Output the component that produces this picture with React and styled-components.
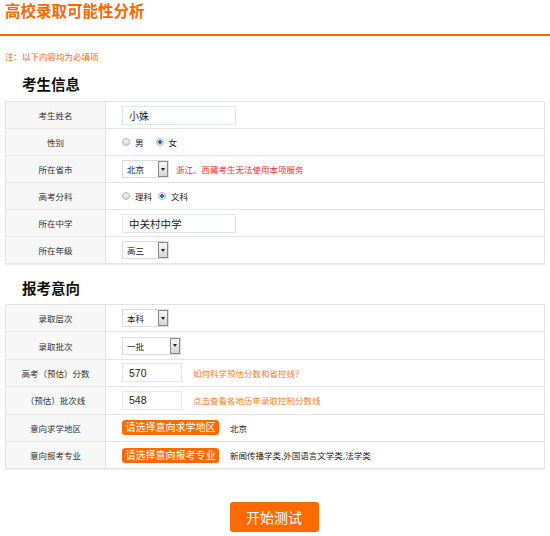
import React from 'react';
import styled, { createGlobalStyle } from 'styled-components';

const GlobalStyle = createGlobalStyle`
  body {
    margin: 0;
    background: #fff;
    font-family: "Liberation Sans", "Noto Sans CJK SC", sans-serif;
    color: #333;
  }
`

const Page = styled.div`
  width: 550px;
  height: 536px;
  overflow: hidden;
`

const Header = styled.div`
  box-sizing: border-box;
  height: 36px;
  border-bottom: 2px solid #ff6600;
  padding: 1px 5px 0;
  h1 {
    margin: 0;
    font-size: 15.5px;
    line-height: 22px;
    font-weight: bold;
    color: #ff6600;
  }
`

const Note = styled.div`
  margin: 14px 5px 0;
  font-size: 8.5px;
  line-height: 14px;
  color: #ff6600;
`

const SectionTitle = styled.h2`
  margin: ${p => p.$top}px 0 0 22px;
  font-size: 14.5px;
  line-height: 20px;
  font-weight: bold;
  color: #111;
`

const Table = styled.table`
  margin: ${p => p.$top}px 5px 0;
  width: 540px;
  border-collapse: collapse;
  border: 1px solid #e3e3e3;
  box-shadow: 0 1px 1px #eee;
  td {
    height: ${p => p.$row}px;
    border-bottom: 1px solid #e6e6e6;
    padding: 0;
    font-size: 8.5px;
  }
`

const Label = styled.td`
  width: 99px;
  background: #f7f7f7;
  border-right: 1px solid #e3e3e3;
  text-align: center;
  color: #333;
`

const Value = styled.td`
  padding-left: 16px !important;
`

const Cell = styled.div`
  display: flex;
  align-items: center;
  gap: ${p => p.$gap || 10}px;
`

const TextBox = styled.div`
  width: ${p => p.$w}px;
  height: 19px;
  box-sizing: border-box;
  border: 1px solid #e2e8ea;
  padding-left: 6px;
  display: flex;
  align-items: center;
  font-size: ${p => p.$fs || 10}px;
  color: #222;
`

const Select = styled.div`
  width: ${p => p.$w}px;
  height: 18px;
  box-sizing: border-box;
  border: 1px solid #dcdcdc;
  display: flex;
  align-items: center;
  justify-content: space-between;
  font-size: 8.5px;
  color: #222;
  padding-left: 4px;
`

const SelectBtn = styled.span`
  box-sizing: border-box;
  width: 10px;
  height: 16px;
  border: 1px solid #8a8a8a;
  background: linear-gradient(#f6f6f6, #d6d6d6);
  display: flex;
  align-items: center;
  justify-content: center;
  &::after {
    content: "";
    border-left: 2.5px solid transparent;
    border-right: 2.5px solid transparent;
    border-top: 3px solid #222;
  }
`

const Radio = styled.span`
  display: inline-flex;
  align-items: center;
  gap: 5px;
  font-size: 8.5px;
  color: #222;
  &::before {
    content: "";
    width: 6px;
    height: 6px;
    border-radius: 50%;
    border: 1px solid #b8b8b8;
    background: ${p => p.$on ? 'radial-gradient(circle, #2a6fb0 0 1.6px, #dfe6ee 2px)' : 'linear-gradient(#f2f2f2, #dadada)'};
  }
`

const Hint = styled.span`
  font-size: 8.5px;
  color: ${p => p.$red ? '#ff2a2a' : '#ff7a2e'};
`

const PickBtn = styled.span`
  display: inline-block;
  width: 97px;
  height: 15px;
  line-height: 15px;
  text-align: center;
  background: #ff6a00;
  border-radius: 3px;
  color: #fff;
  font-size: 10px;
`

const Plain = styled.span`
  font-size: 8.5px;
  color: #222;
`

const Footer = styled.div`
  display: flex;
  justify-content: center;
  margin-top: 33px;
  padding-right: 2px;
`

const StartBtn = styled.button`
  width: 89px;
  height: 30px;
  border: none;
  border-radius: 3px;
  background: #ff6a00;
  color: #fff;
  font-family: inherit;
  font-size: 14px;
  padding: 0;
`

const Sel = ({ w, children }) => (
  <Select $w={w}>{children}<SelectBtn /></Select>
)

export default function App() {
  return (
    <Page>
      <GlobalStyle />
      <Header><h1>高校录取可能性分析</h1></Header>
      <Note>注：以下内容均为必填项</Note>

      <SectionTitle $top={11}>考生信息</SectionTitle>
      <Table $top={6} $row={26}>
        <tbody>
          <tr><Label>考生姓名</Label><Value><TextBox $w={114}>小姝</TextBox></Value></tr>
          <tr><Label>性别</Label><Value><Cell $gap={12}><Radio>男</Radio><Radio $on>女</Radio></Cell></Value></tr>
          <tr><Label>所在省市</Label><Value><Cell $gap={7}><Sel w={47}>北京</Sel><Hint $red>浙江、西藏考生无法使用本项服务</Hint></Cell></Value></tr>
          <tr><Label>高考分科</Label><Value><Cell $gap={6}><Radio>理科</Radio><Radio $on>文科</Radio></Cell></Value></tr>
          <tr><Label>所在中学</Label><Value><TextBox $w={114} $fs={10.5}>中关村中学</TextBox></Value></tr>
          <tr><Label>所在年级</Label><Value><Sel w={47}>高三</Sel></Value></tr>
        </tbody>
      </Table>

      <SectionTitle $top={15}>报考意向</SectionTitle>
      <Table $top={5} $row={26.4}>
        <tbody>
          <tr><Label>录取层次</Label><Value><Sel w={47}>本科</Sel></Value></tr>
          <tr><Label>录取批次</Label><Value><Sel w={59}>一批</Sel></Value></tr>
          <tr><Label>高考（预估）分数</Label><Value><Cell $gap={11}><TextBox $w={60} $fs={10.5}>570</TextBox><Hint>如何科学预估分数和省控线？</Hint></Cell></Value></tr>
          <tr><Label>（预估）批次线</Label><Value><Cell $gap={11}><TextBox $w={60} $fs={10.5}>548</TextBox><Hint>点击查看各地历年录取控制分数线</Hint></Cell></Value></tr>
          <tr><Label>意向求学地区</Label><Value><Cell $gap={11}><PickBtn>请选择意向求学地区</PickBtn><Plain>北京</Plain></Cell></Value></tr>
          <tr><Label>意向报考专业</Label><Value><Cell $gap={11}><PickBtn>请选择意向报考专业</PickBtn><Plain>新闻传播学类,外国语言文学类,法学类</Plain></Cell></Value></tr>
        </tbody>
      </Table>

      <Footer><StartBtn>开始测试</StartBtn></Footer>
    </Page>
  );
}
